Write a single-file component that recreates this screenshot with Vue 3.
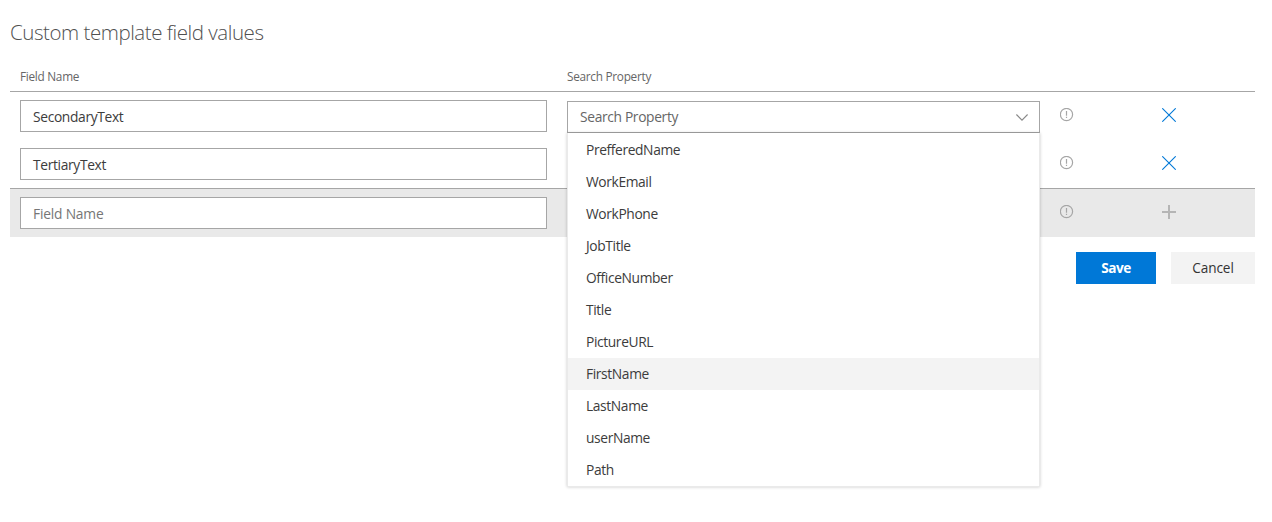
<script setup>
import { ref } from 'vue'

const rows = ref([{ name: 'SecondaryText' }, { name: 'TertiaryText' }])
const draft = ref('')
const options = [
  'PrefferedName', 'WorkEmail', 'WorkPhone', 'JobTitle', 'OfficeNumber', 'Title',
  'PictureURL', 'FirstName', 'LastName', 'userName', 'Path',
]
const highlighted = ref('FirstName')
</script>

<template>
  <main class="panel">
    <h1 class="title"><span>Custom template field values</span></h1>
    <div class="grid head">
      <span class="h-name">Field Name</span>
      <span class="h-prop">Search Property</span>
    </div>

    <div v-for="(row, i) in rows" :key="row.name" class="grid row">
      <div class="field"><span>{{ row.name }}</span></div>
      <div class="picker">
        <div v-if="i === 0" class="select">
          <span class="select-label">Search Property</span>
          <svg class="chevron" width="12" height="7" viewBox="0 0 12 7"><path d="M.4 .5L6 6.1L11.6 .5" /></svg>
        </div>
        <ul v-if="i === 0" class="menu">
          <li v-for="o in options" :key="o" :class="['option', { active: o === highlighted }]"><span>{{ o }}</span></li>
        </ul>
      </div>
      <svg class="info" width="14" height="14" viewBox="0 0 14 14"><circle cx="6.5" cy="6.5" r="6.1" /><path d="M6.5 3V7.7M6.5 8.8V10" /></svg>
      <svg class="remove" width="14" height="14" viewBox="0 0 14 14"><path d="M.3 .3L13.7 13.7M13.7 .3L.3 13.7" /></svg>
    </div>

    <div class="grid row new">
      <div class="field"><span class="hint">{{ draft || 'Field Name' }}</span></div>
      <div></div>
      <svg class="info" width="14" height="14" viewBox="0 0 14 14"><circle cx="6.5" cy="6.5" r="6.1" /><path d="M6.5 3V7.7M6.5 8.8V10" /></svg>
      <svg class="add" width="14" height="14" viewBox="0 0 14 14"><path d="M7 0V14M0 7H14" /></svg>
    </div>

    <div class="actions">
      <button class="btn save">Save</button>
      <button class="btn cancel">Cancel</button>
    </div>
  </main>
</template>

<style>
body { background: #fff; }
</style>

<style scoped>
.panel {
  box-sizing: border-box;
  width: 1255px;
  height: 522px;
  padding: 18px 0 0 10px;
  font-family: "Open Sans", "Noto Sans", sans-serif;
  font-size: 13.8px;
  letter-spacing: -0.34px;
  color: #3c3c3c;
}
.title {
  margin: 0;
  height: 44px;
  line-height: 29px;
  font-size: 20.5px;
  font-weight: 300;
  letter-spacing: -0.45px;
  color: #505050;
}
.grid {
  display: grid;
  grid-template-columns: 527px 473px 82px 14px;
  column-gap: 20px;
  padding: 0 10px;
}
.head {
  height: 29px;
  line-height: 29px;
  font-size: 11.8px;
  letter-spacing: -0.28px;
  color: #666;
  border-bottom: 1px solid #a6a6a6;
}
.row { height: 40px; padding-top: 8px; }
.field {
  box-sizing: border-box;
  height: 32px;
  padding-left: 12px;
  border: 1px solid #a6a6a6;
  background: #fff;
  line-height: 32px;
}
.hint { color: #767676; letter-spacing: -0.2px; }
.picker { position: relative; padding-top: 1px; height: 32px; }
.select {
  box-sizing: border-box;
  display: flex;
  align-items: center;
  justify-content: space-between;
  height: 32px;
  padding: 0 11px 0 12px;
  border: 1px solid #a6a6a6;
  background: #fff;
  color: #666;
}
.select-label { line-height: 30px; }
.chevron { fill: none; stroke: #888; stroke-width: 1.1; }
.menu {
  position: absolute;
  z-index: 2;
  top: 33px;
  left: 0;
  box-sizing: border-box;
  width: 473px;
  margin: 0;
  padding: 1px 0 0;
  list-style: none;
  background: #fff;
  border: 1px solid #eaeaea;
  border-top: 0;
  box-shadow: 0 0 3px rgba(0, 0, 0, 0.22);
}
.option { height: 32px; padding-left: 18px; line-height: 32px; letter-spacing: -0.38px; }
.active { background: #f3f3f3; }
.info { fill: none; stroke: #a6a6a6; stroke-width: 1.2; margin-top: 8px; }
.remove { fill: none; stroke: #0078d7; stroke-width: 1.1; margin-top: 8px; }
.add { fill: none; stroke: #b5b5b5; stroke-width: 2; margin-top: 8px; }
.new { border-top: 1px solid #a6a6a6; background: #e9e9e9; }
.actions { display: flex; justify-content: flex-end; gap: 15px; margin-top: 15px; }
.btn {
  height: 32px;
  padding: 0;
  border: 0;
  background: #f3f3f3;
  font: 600 13.6px/32px "Open Sans", "Noto Sans", sans-serif;
  letter-spacing: -0.45px;
  color: #333;
}
.save { width: 80px; background: #0078d7; color: #fff; font-weight: 700; }
.cancel { width: 84px; font-weight: 500; letter-spacing: -0.1px; }
</style>
